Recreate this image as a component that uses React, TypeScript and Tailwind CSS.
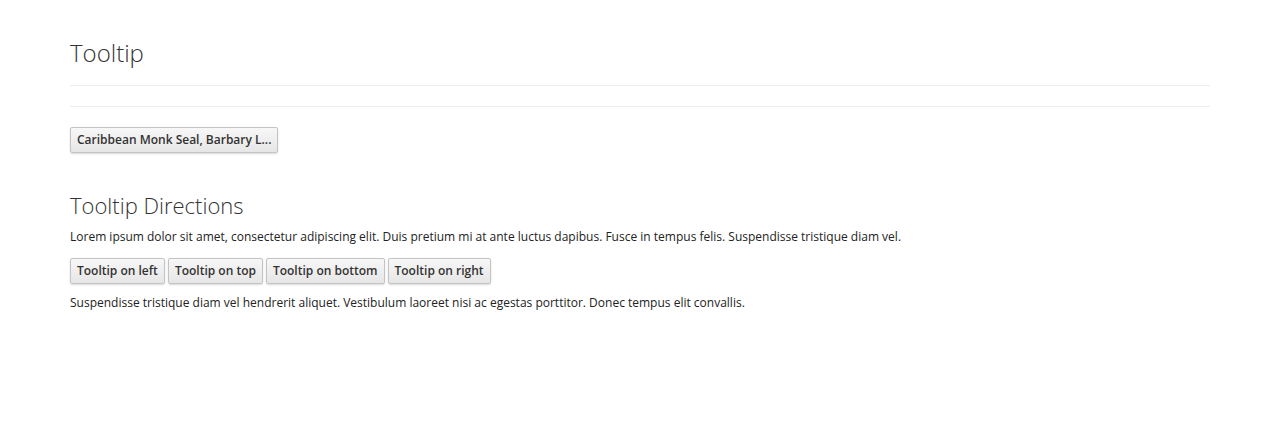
import React from "react";

const Btn = ({ children }: { children: React.ReactNode }) => (
  <button className="h-[26px] rounded-[2px] border border-[#c4c4c4] bg-gradient-to-b from-[#f7f7f7] to-[#e6e6e6] px-[6px] text-[12px] font-semibold leading-[24px] text-[#333] shadow-[0_1px_2px_rgba(0,0,0,0.15)]">
    {children}
  </button>
);

export default function App() {
  const dirs = ["Tooltip on left", "Tooltip on top", "Tooltip on bottom", "Tooltip on right"];
  return (
    <div className="h-[423px] bg-white px-[70px] pt-[36px] text-[#222]" style={{ fontFamily: '"Open Sans", sans-serif' }}>
      <h1 className="text-[24px] font-light leading-[34px] text-[#333]">Tooltip</h1>
      <hr className="mt-[15px] border-t border-[#eee]" />
      <hr className="mt-[20px] border-t border-[#eee]" />
      <div className="mt-[19px]">
        <Btn>Caribbean Monk Seal, Barbary L...</Btn>
      </div>
      <h2 className="mt-[37px] mb-[8px] text-[22px] font-light leading-[30px] text-[#333]">Tooltip Directions</h2>
      <p className="text-[12px] leading-[18px]">
        Lorem ipsum dolor sit amet, consectetur adipiscing elit. Duis pretium mi at ante luctus dapibus. Fusce in tempus felis. Suspendisse tristique diam vel.
      </p>
      <div className="mt-[12px] flex gap-[3px]">
        {dirs.map((d) => (
          <Btn key={d}>{d}</Btn>
        ))}
      </div>
      <p className="mt-[10px] text-[12px] leading-[18px]">
        Suspendisse tristique diam vel hendrerit aliquet. Vestibulum laoreet nisi ac egestas porttitor. Donec tempus elit convallis.
      </p>
    </div>
  );
}
